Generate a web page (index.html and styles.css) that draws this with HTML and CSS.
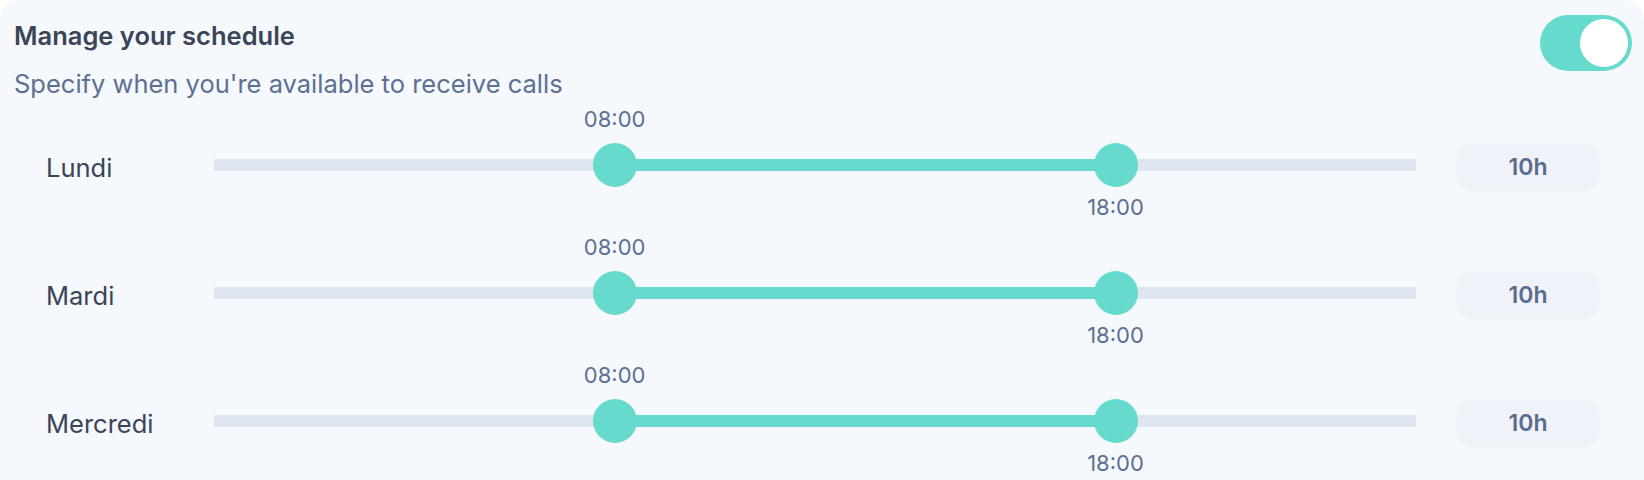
FILE: index.html
```html
<html>
<head>
<link rel="stylesheet" href="styles.css">
</head>
<body>

<div class="card">

	<div class="head">
		<div>
			<div class="title">Manage your schedule</div>
			<div class="subtitle">Specify when you're available to receive calls</div>
		</div>
		<div class="toggle on"><span class="knob"></span></div>
	</div>

	<div class="rows">

		<div class="row">
			<div class="day">Lundi</div>
			<div class="track">
				<div class="fill" style="left:33.333%;width:41.667%"></div>
				<div class="thumb" style="left:33.333%"><span class="time up">08:00</span></div>
				<div class="thumb" style="left:75%"><span class="time down">18:00</span></div>
			</div>
			<div class="total">10h</div>
		</div>

		<div class="row">
			<div class="day">Mardi</div>
			<div class="track">
				<div class="fill" style="left:33.333%;width:41.667%"></div>
				<div class="thumb" style="left:33.333%"><span class="time up">08:00</span></div>
				<div class="thumb" style="left:75%"><span class="time down">18:00</span></div>
			</div>
			<div class="total">10h</div>
		</div>

		<div class="row">
			<div class="day">Mercredi</div>
			<div class="track">
				<div class="fill" style="left:33.333%;width:41.667%"></div>
				<div class="thumb" style="left:33.333%"><span class="time up">08:00</span></div>
				<div class="thumb" style="left:75%"><span class="time down">18:00</span></div>
			</div>
			<div class="total">10h</div>
		</div>

	</div>

</div>

</body>
</html>
```

FILE: styles.css
```css
body{
	margin:0;
	background-color:#ffffff;
	font-family:'Inter',sans-serif;
}

.card{
	background-color:#f5f8fd;
	border-radius:20px;
	padding:15px 12px 40px 14px;
	min-height:480px;
	box-sizing:border-box;
}

.head{
	display:flex;
	justify-content:space-between;
	align-items:flex-start;
}
.title{
	margin-top:5px;
	font-size:25.5px;
	line-height:32px;
	font-weight:600;
	color:#3a4557;
}
.subtitle{
	margin-top:16px;
	font-size:25.5px;
	line-height:32px;
	color:#5d7091;
}

.toggle{
	width:92px;
	height:56px;
	border-radius:28px;
	background-color:#dfe5f0;
	padding:4px;
	box-sizing:border-box;
	display:flex;
}
.toggle.on{
	background-color:#66dbcd;
	justify-content:flex-end;
}
.knob{
	width:48px;
	height:48px;
	border-radius:50%;
	background-color:#ffffff;
}

.rows{
	margin-top:3px;
	padding:0 32px;
}
.row{
	display:grid;
	grid-template-columns:128px 1fr 144px;
	column-gap:40px;
	align-items:center;
	height:128px;
}
.day{
	font-size:25.5px;
	color:#3a4557;
	white-space:nowrap;
}

.track{
	position:relative;
	height:12px;
	margin-bottom:4px;
	background-color:#dfe5f0;
}
.fill{
	position:absolute;
	top:0;
	height:12px;
	background-color:#66dbcd;
}
.thumb{
	position:absolute;
	top:50%;
	width:44px;
	height:44px;
	margin:-22px 0 0 -22px;
	border-radius:50%;
	background-color:#66dbcd;
}
.time{
	position:absolute;
	left:50%;
	transform:translateX(-50%);
	font-size:22px;
	line-height:22px;
	color:#5d7091;
	white-space:nowrap;
}
.time.up{
	bottom:calc(100% + 13px);
}
.time.down{
	top:calc(100% + 9px);
}

.total{
	height:48px;
	border-radius:16px;
	background-color:#eff2f8;
	color:#596c8c;
	font-size:23px;
	font-weight:600;
	display:flex;
	align-items:center;
	justify-content:center;
}
```
